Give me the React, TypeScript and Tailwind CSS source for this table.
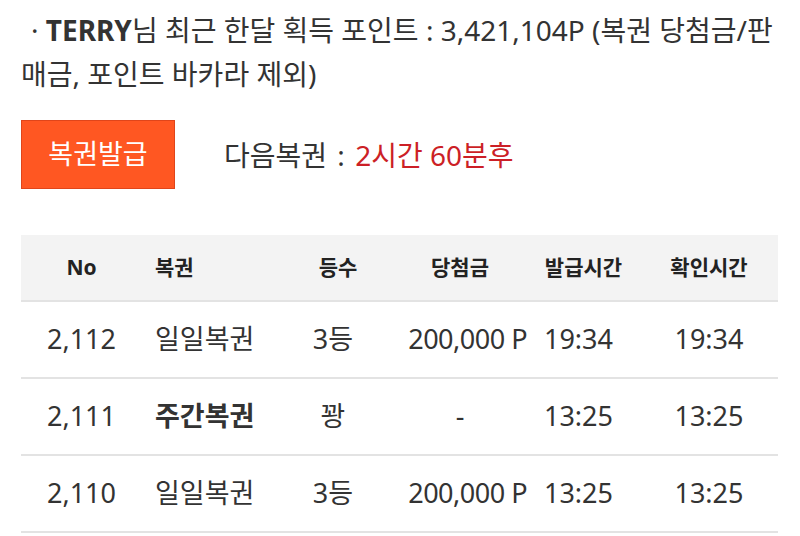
import React from "react";

const rows = [
  { no: "2,112", name: "일일복권", bold: false, rank: "3등", prize: "200,000 P", issued: "19:34", checked: "19:34" },
  { no: "2,111", name: "주간복권", bold: true, rank: "꽝", prize: "-", issued: "13:25", checked: "13:25" },
  { no: "2,110", name: "일일복권", bold: false, rank: "3등", prize: "200,000 P", issued: "13:25", checked: "13:25" },
];

const cols = "grid grid-cols-[118px_134px_120px_134px_113px_138px]";

function App() {
  return (
    <div
      className="min-h-[536px] bg-white px-[21px] pt-[8px] text-[#333]"
      style={{ fontFamily: '"Noto Sans", "Noto Sans CJK KR", sans-serif' }}
    >
      <p className="indent-[10px] text-[28px] leading-[44px]">
        · <b className="font-bold">TERRY</b>님 최근 한달 획득 포인트 : 3,421,104P (복권 당첨금/판매금, 포인트 바카라 제외)
      </p>

      <div className="mt-[24px] flex items-center">
        <button className="h-[69px] w-[154px] border border-[#e0451a] bg-[#ff5722] text-[27px] text-white">
          복권발급
        </button>
        <div className="ml-[49px] text-[28px]">
          다음복권 <span className="px-[3px]">:</span> <span className="text-[#cc1f26]">2시간 60분후</span>
        </div>
      </div>

      <div className="mt-[46px] w-[757px]">
        <div className={`${cols} h-[67px] items-center border-b-2 border-[#e3e3e3] bg-[#f3f3f3] text-[21px] font-bold text-[#222]`}>
          <div className="pl-[3px] text-center">No</div>
          <div className="pl-[16px]">복권</div>
          <div className="pl-[10px] text-center">등수</div>
          <div className="text-center">당첨금</div>
          <div className="text-center">발급시간</div>
          <div className="text-center">확인시간</div>
        </div>
        {rows.map((r) => (
          <div key={r.no} className={`${cols} h-[77px] items-center border-b-2 border-[#e3e3e3] text-[27px]`}>
            <div className="pl-[3px] text-center">{r.no}</div>
            <div className={`whitespace-nowrap pl-[16px] ${r.bold ? "font-bold" : ""}`}>{r.name}</div>
            <div className="text-center">{r.rank}</div>
            <div className={r.prize === "-" ? "text-center" : "whitespace-nowrap text-right tracking-[-0.5px]"}>{r.prize}</div>
            <div className="pr-[27px] text-right">{r.issued}</div>
            <div className="text-center">{r.checked}</div>
          </div>
        ))}
      </div>
    </div>
  );
}

export default App;
